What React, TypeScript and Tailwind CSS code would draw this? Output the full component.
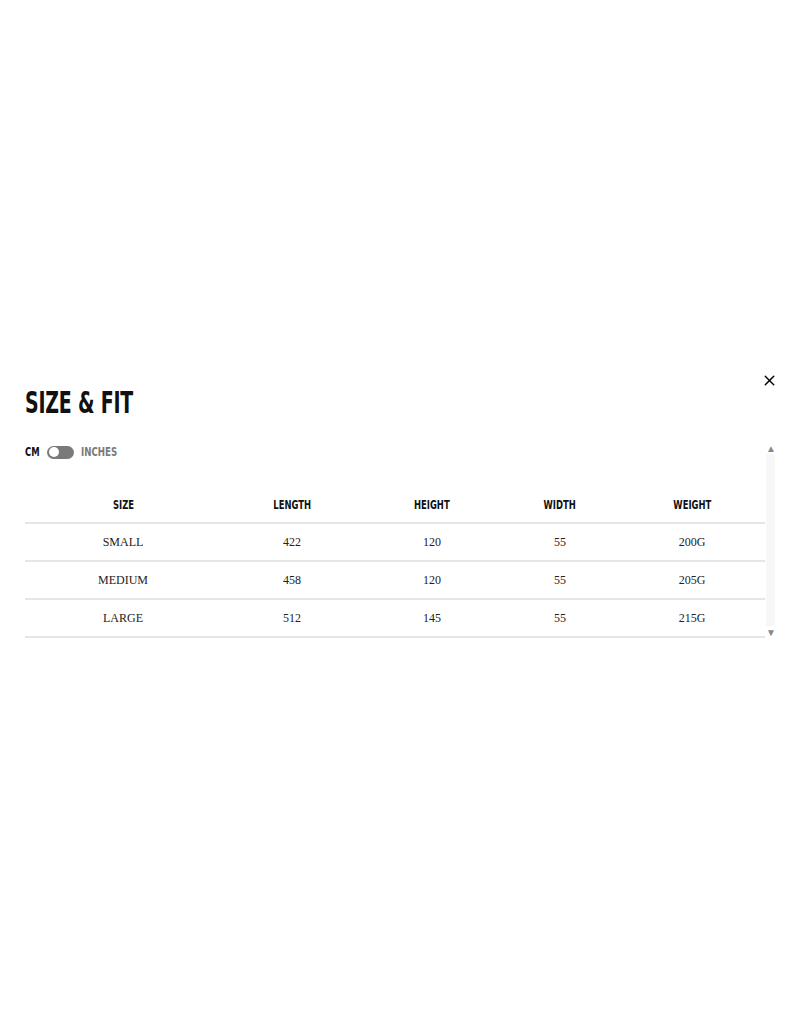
import { X } from 'lucide-react';

const rows = [
  ['SMALL', '422', '120', '55', '200G'],
  ['MEDIUM', '458', '120', '55', '205G'],
  ['LARGE', '512', '145', '55', '215G'],
];
const headers = ['SIZE', 'LENGTH', 'HEIGHT', 'WIDTH', 'WEIGHT'];

const cond = { fontFamily: '"DejaVu Sans Condensed", "DejaVu Sans", sans-serif', fontStretch: 'condensed' };

export default function App() {
  return (
    <div className="w-[800px] h-[1024px] bg-white pt-[366px]">
      <div className="relative pl-[25px] pr-[25px]">
        <button className="absolute right-[22px] top-[6px] text-black">
          <X className="h-[17px] w-[17px]" strokeWidth={2} />
        </button>
        <h2 style={cond} className="origin-left scale-x-[0.68] text-[31px] font-bold leading-none text-[#111] pt-[21px] tracking-[-0.3px]">
          SIZE &amp; FIT
        </h2>
        <div className="mt-[25px] flex">
          <div className="w-[740px]">
            <div style={cond} className="flex items-center text-[12px] font-bold">
              <span className="inline-block w-[15px] origin-left scale-x-[0.78] text-[#111]">CM</span>
              <span className="ml-[7px] flex h-[13px] w-[27px] items-center rounded-full bg-[#7a7a7a] px-[1.5px]">
                <span className="h-[10px] w-[10px] rounded-full bg-white" />
              </span>
              <span className="ml-[7px] inline-block origin-left scale-x-[0.8] text-[#7a7a7a]">INCHES</span>
            </div>
            <div style={cond} className="mt-[26px] grid h-[37px] grid-cols-[196px_142px_138px_118px_146px] items-center border-b-2 border-[#e6e6e6] text-[12px] font-bold text-[#111]">
              {headers.map(h => (
                <div key={h} className="text-center">
                  <span className="inline-block scale-x-[0.78]">{h}</span>
                </div>
              ))}
            </div>
            {rows.map(r => (
              <div key={r[0]} className="grid h-[38px] grid-cols-[196px_142px_138px_118px_146px] items-center border-b-2 border-[#e6e6e6] text-[12px] text-[#222]" style={{ fontFamily: '"Liberation Serif", serif' }}>
                {r.map((c, i) => (
                  <div key={i} className="text-center">{c}</div>
                ))}
              </div>
            ))}
          </div>
          <div className="mt-[0px] ml-[1px] flex w-[10px] flex-col items-center">
            <span className="text-[10px] leading-none text-[#888]">▲</span>
            <div className="mt-[1px] h-[172px] w-[9px] bg-[#f7f7f7]" />
            <span className="mt-[1px] text-[10px] leading-none text-[#888]">▼</span>
          </div>
        </div>
      </div>
    </div>
  );
}
